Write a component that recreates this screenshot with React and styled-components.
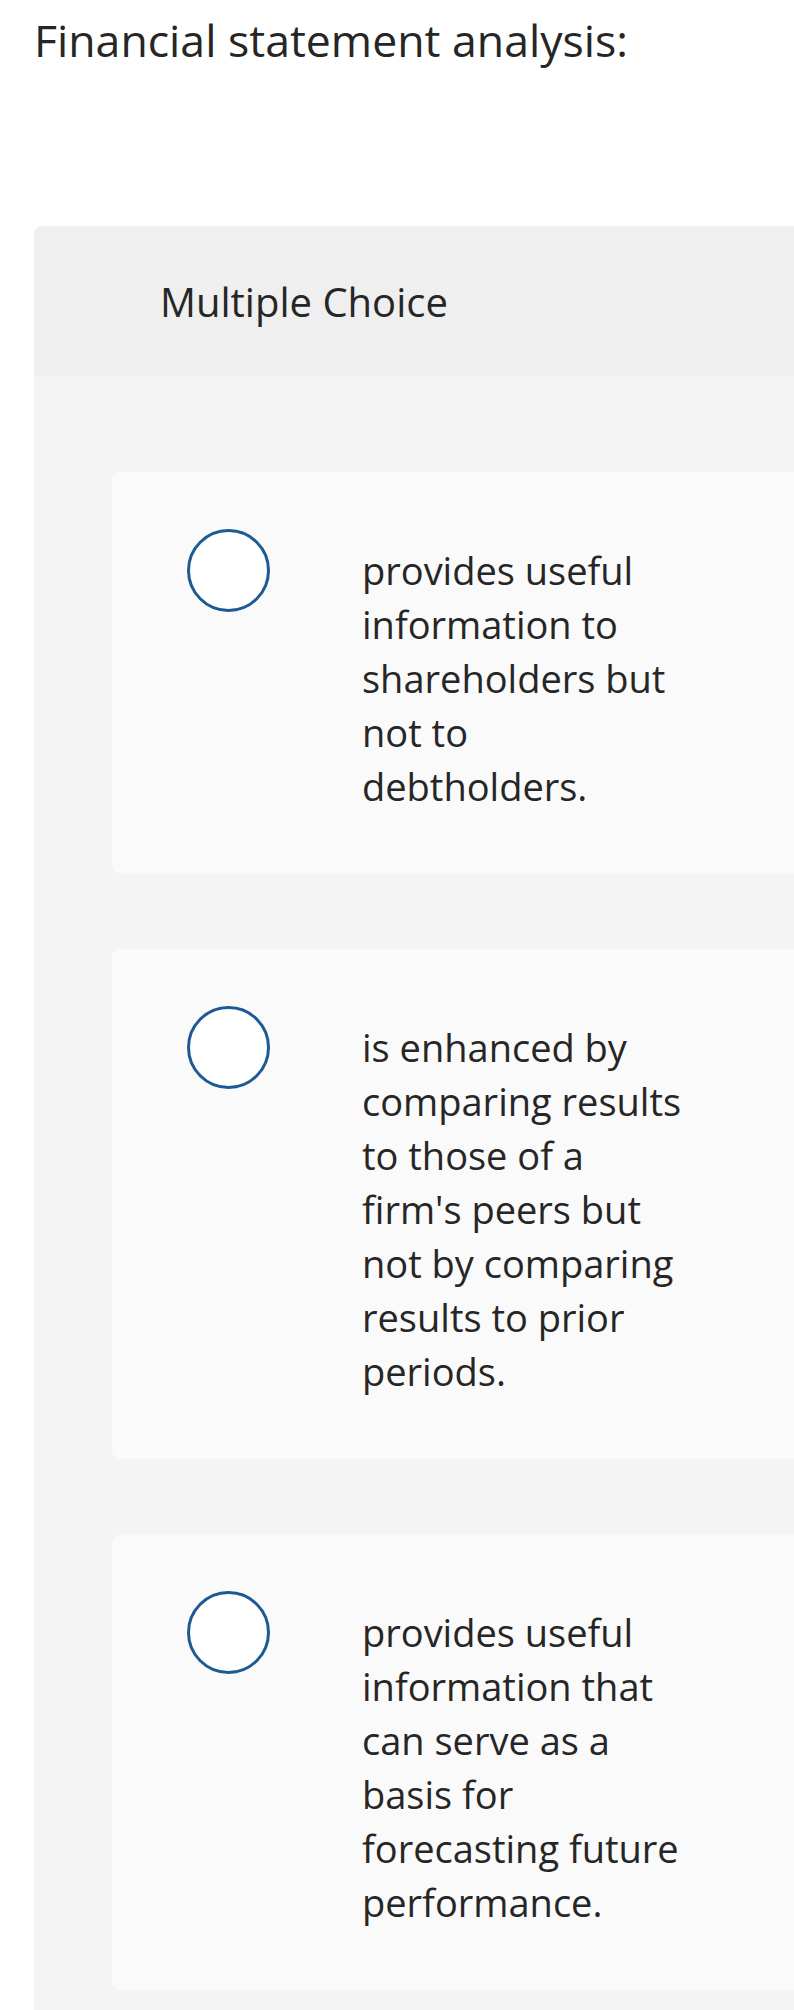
import React from "react";
import styled, { createGlobalStyle } from "styled-components";

const GlobalStyle = createGlobalStyle`
  html, body {
    margin: 0;
    padding: 0;
    background: #ffffff;
  }
  body {
    font-family: "Open Sans", Lato, "Liberation Sans", sans-serif;
    color: #262626;
  }
`;

const Page = styled.div`
  min-height: 100vh;
  display: flex;
  flex-direction: column;
  padding: 10px 0 0 34px;
  box-sizing: border-box;
`;

const Prompt = styled.h1`
  margin: 0;
  font-size: 44.6px;
  font-weight: 400;
  line-height: 60px;
  color: #262626;
`;

const Question = styled.section`
  flex: 1;
  margin-top: 156px;
  border-radius: 8px 0 0 0;
  background: #f4f4f4;
  overflow: hidden;
`;

const Header = styled.div`
  height: 150px;
  display: flex;
  align-items: center;
  padding-left: 126px;
  background: #efefef;
  font-size: 40px;
  color: #262626;
`;

const Choices = styled.div`
  display: flex;
  flex-direction: column;
  gap: 75px;
  padding: 96px 0 21px 78px;
`;

const Choice = styled.label`
  display: flex;
  align-items: flex-start;
  padding: 57px 0 61px 75px;
  background: #fafafa;
  border-radius: 9px 0 0 9px;
  cursor: pointer;
`;

const Radio = styled.span`
  flex: none;
  width: 77px;
  height: 77px;
  border: 3px solid #1d5a93;
  border-radius: 50%;
  background: #ffffff;
`;

const ChoiceText = styled.span`
  margin: 14px 0 0 92px;
  width: 331px;
  font-size: 38px;
  line-height: 54px;
  color: #262626;
`;

const options = [
  "provides useful information to shareholders but not to debtholders.",
  "is enhanced by comparing results to those of a firm's peers but not by comparing results to prior periods.",
  "provides useful information that can serve as a basis for forecasting future performance.",
];

export default function App() {
  return (
    <>
      <GlobalStyle />
      <Page>
        <Prompt>Financial statement analysis:</Prompt>
        <Question>
          <Header>Multiple Choice</Header>
          <Choices>
            {options.map((text) => (
              <Choice key={text}>
                <Radio />
                <ChoiceText>{text}</ChoiceText>
              </Choice>
            ))}
          </Choices>
        </Question>
      </Page>
    </>
  );
}
